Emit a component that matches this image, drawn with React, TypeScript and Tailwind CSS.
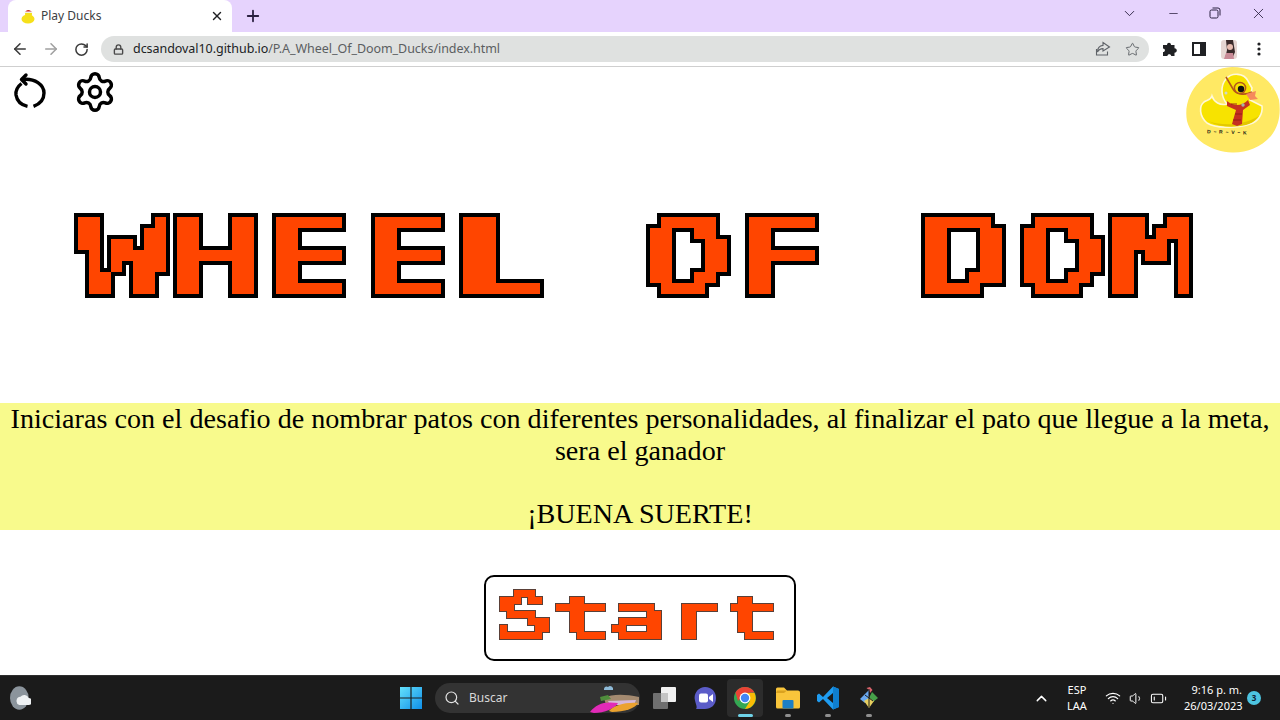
import React from "react";
import { ArrowLeft, ArrowRight, RotateCw, Lock, Star, ChevronDown, ChevronUp, Minus, X, Plus, Settings, Search, Wifi, Volume1, BatteryLow } from "lucide-react";

function PixelFilter({ id, tile, edge, edgeColor }: { id: string; tile: number; edge: number; edgeColor: string }) {
  const c = (tile - 1) / 2;
  return (
    <filter id={id} x="-2%" y="-10%" width="104%" height="120%" colorInterpolationFilters="sRGB" primitiveUnits="userSpaceOnUse">
      <feFlood x={c} y={c} width="1" height="1" floodColor="#ff4500" />
      <feComposite width={tile} height={tile} />
      <feTile result="grid" />
      <feComposite in="SourceAlpha" in2="grid" operator="in" />
      <feMorphology operator="dilate" radius={c} />
      <feComponentTransfer result="mask">
        <feFuncA type="discrete" tableValues="0 1" />
      </feComponentTransfer>
      <feFlood floodColor="#ff4500" result="orange" />
      <feComposite in="orange" in2="mask" operator="in" result="blocks" />
      <feMorphology in="mask" operator="dilate" radius={edge} result="wide" />
      <feFlood floodColor={edgeColor} result="ink" />
      <feComposite in="ink" in2="wide" operator="in" result="edge" />
      <feMerge>
        <feMergeNode in="edge" />
        <feMergeNode in="blocks" />
      </feMerge>
    </filter>
  );
}

function Filters() {
  return (
    <svg width="0" height="0" className="absolute">
      <PixelFilter id="pixelTitle" tile={11} edge={4} edgeColor="#000000" />
      <PixelFilter id="pixelStart" tile={7} edge={1} edgeColor="#5a4038" />
    </svg>
  );
}

function DuckFavicon() {
  return (
    <svg width="16" height="16" viewBox="0 0 16 16">
      <ellipse cx="8" cy="11" rx="6.5" ry="4.5" fill="#f6e01a" />
      <circle cx="8.5" cy="6" r="3.5" fill="#f6e01a" />
      <path d="M5 4 Q8 0 12 4 Z" fill="#c8202a" />
      <rect x="4.5" y="3.5" width="8" height="1.4" fill="#f3f3f3" />
    </svg>
  );
}

function DuckLogo() {
  return (
    <svg width="100" height="92" viewBox="0 0 100 92" className="-mt-[3px]">
      <path d="M52 3 C72 3 93 14 99 36 C101 50 99 62 91 72 C80 84 66 89 52 88.5 C32 88 12 76 7 57 C2 30 24 4 52 3 Z" fill="#ffe964" />
      <path d="M32 32 C34 38 40 42 47 40 C41 33 40 22 46 15 C52 8 64 9 68 17 L72 24 L70 36 C74 38 78 40 82 42 C83 50 78 58 70 60 C55 65 35 64 27 59 C19 52 19 42 24 38 C27 36 31 36 32 32 Z" fill="#f7e300" stroke="#fff8d8" strokeWidth="1.6" />
      <path d="M28 57 C42 62 62 62 79 52 C74 58 70 60 66 61 C52 64 38 63 28 57 Z" fill="#e3c800" />
      <path d="M46 13 L53 25 C56 30 64 32 72 28" fill="none" stroke="#b5561c" strokeWidth="1.6" />
      <circle cx="60" cy="24" r="5.6" fill="#f7e300" stroke="#b5561c" strokeWidth="1.5" />
      <circle cx="61" cy="25" r="3.2" fill="#111" />
      <path d="M66 30 L76 27 L75 32 L78 35 L70 36 Z" fill="#f58a5c" />
      <path d="M47 37 C54 43 62 42 68 36 L70 41 L63 46 L62 60 L57 62 L52 60 L56 46 L47 42 Z" fill="#c5301f" />
      <path d="M53 56 H61 M55 50 H62 M51 40 H57" stroke="#8e1e12" strokeWidth="0.9" />
      <circle cx="63" cy="41" r="1.7" fill="#a8b0a8" />
      <circle cx="46" cy="29" r="1.5" fill="#cfd6cc" />
      <text x="27" y="70" fontSize="5" fontWeight="700" fontFamily="'Liberation Sans', sans-serif" fill="#111" transform="rotate(2 50 70)" xmlSpace="preserve">D  ~  R  ~  V  ~  K</text>
    </svg>
  );
}

function ReloadIcon() {
  return (
    <svg width="36" height="40" viewBox="0 0 36 40" fill="none" stroke="#000" strokeWidth="3.4" className="ml-3 mt-1">
      <path d="M14 4 L9.5 8.5 L14 13" strokeLinecap="round" strokeLinejoin="round" />
      <path d="M10.5 8.5 C23 7 32 14 32 22 C32 28 28 33 21.5 35.4" strokeLinecap="butt" />
      <path d="M9.5 12.5 C5 16 3.5 20 4 24 C5 30 9 34 15.5 35.4" strokeLinecap="butt" />
    </svg>
  );
}

function PuzzleIcon() {
  return (
    <svg width="16" height="16" viewBox="0 0 16 16" fill="#202124">
      <path d="M1 4 H5 C5 1 9 1 9 4 H12.5 V7.3 C15.6 7.3 15.6 11.7 12.5 11.7 V15 H9.2 C9.2 12.6 5.4 12.6 5.4 15 H1 V11 C3.6 11 3.6 7.4 1 7.4 Z" />
    </svg>
  );
}

function WindowsLogo() {
  return (
    <svg width="22" height="22" viewBox="0 0 22 22">
      <defs>
        <linearGradient id="win" x1="0" y1="0" x2="1" y2="1">
          <stop offset="0" stopColor="#64e0fb" />
          <stop offset="1" stopColor="#0f8fe8" />
        </linearGradient>
      </defs>
      <path d="M0 0 H10.4 V10.4 H0 Z M11.6 0 H22 V10.4 H11.6 Z M0 11.6 H10.4 V22 H0 Z M11.6 11.6 H22 V22 H11.6 Z" fill="url(#win)" />
    </svg>
  );
}

function SearchArt() {
  return (
    <svg width="50" height="30" viewBox="0 0 50 30">
      <path d="M14 6 a2.5 2.5 0 0 1 4 -2 a3 3 0 0 1 5 3 H14 Z" fill="#8fbbd8" />
      <path d="M14 15 C22 11 34 11 49 14 L49 22 L16 22 Z" fill="#a48a70" />
      <path d="M10 14 L18 12 L21 16 L11 18 Z" fill="#4f8d3c" />
      <path d="M18 18 L46 17 L44 22 L20 22 Z" fill="#d5b8d8" />
      <path d="M0 29 C6 21 14 18 28 20 C26 25 14 30 4 30 Z" fill="#e22ab8" />
      <path d="M19 28 C24 22 36 19 48 20 C46 25 34 29 22 29 Z" fill="#eba22f" />
    </svg>
  );
}

function TaskView() {
  return (
    <svg width="24" height="24" viewBox="0 0 24 24">
      <rect x="9" y="1" width="15" height="15" rx="1" fill="#f1f1f1" />
      <rect x="1" y="7" width="15" height="16" rx="1" fill="#6f6f6f" />
      <rect x="9" y="7" width="7" height="9" fill="#c4c4c4" />
    </svg>
  );
}

function MeetIcon() {
  return (
    <svg width="24" height="24" viewBox="0 0 24 24">
      <path d="M12 1 C19 1 23 6 23 12 C23 19 18 23 12 23 L3 23 C5 21 2 17 1.6 12 C1.6 6 6 1 12 1 Z" fill="#5b5cc8" />
      <rect x="6" y="7.5" width="9" height="9" rx="2" fill="#fff" />
      <path d="M16 11 L20 8 V16 L16 13 Z" fill="#fff" />
    </svg>
  );
}

function ChromeIcon() {
  return (
    <svg width="24" height="24" viewBox="0 0 24 24">
      <circle cx="12" cy="12" r="11" fill="#34a853" />
      <path d="M12 1 A11 11 0 0 1 21.5 6.5 L12 7 L5 15 L2.5 6.5 A11 11 0 0 1 12 1 Z" fill="#ea4335" />
      <path d="M12 7 H21.5 A11 11 0 0 1 12 23 L17 15 Z" fill="#fbbc05" />
      <circle cx="12" cy="12" r="5.4" fill="#fff" />
      <circle cx="12" cy="12" r="4.2" fill="#4285f4" />
    </svg>
  );
}

function FolderIcon() {
  return (
    <svg width="24" height="22" viewBox="0 0 24 22">
      <path d="M0 2 a1.5 1.5 0 0 1 1.5 -1.5 H8 L11 3.5 H22 a2 2 0 0 1 2 2 V20 a1.5 1.5 0 0 1 -1.5 1.5 H1.5 A1.5 1.5 0 0 1 0 20 Z" fill="#f9c53b" />
      <path d="M0 6 H8 L11 3.5 H1 Z" fill="#d9a21f" />
      <rect x="6.5" y="13" width="11" height="8.5" rx="1" fill="#1d7fc4" />
    </svg>
  );
}

function VSCodeIcon() {
  return (
    <svg width="22" height="24" viewBox="0 0 22 24">
      <path d="M16 0.5 L22 3 V21 L16 23.5 L6 13 L2 16.5 L0 15 V9 L2 7.5 L6 11 Z M16 7 L10 12 L16 17 Z" fill="#1f9cf0" fillRule="evenodd" />
      <path d="M16 0.5 L22 3 V21 L16 23.5 Z" fill="#0f7fd0" />
    </svg>
  );
}

function GitKrakenIcon() {
  return (
    <svg width="20" height="22" viewBox="0 0 20 22">
      <path d="M10 3 L6 7 L1 12 L6 16 L10 12 Z" fill="#6aa8f0" />
      <path d="M10 3 L7.5 1 L11 0 L13.5 3 L11 6 Z" fill="#d9636b" />
      <path d="M13 5 L19 11 L14 15 L10 11 Z" fill="#47a04a" />
      <path d="M5 14 L10 21 L15 14 L10 11 Z" fill="#e8cf5f" />
      <path d="M10 2 V20 M6 8 L14 14" stroke="#1c1c1c" strokeWidth="1" />
    </svg>
  );
}

function TaskSlot({ className = "", running = false, active = false, children }: { className?: string; running?: boolean; active?: boolean; children: React.ReactNode }) {
  return (
    <div className={`relative flex h-[38px] w-[36px] items-center justify-center rounded ${active ? "bg-[#2c2c2c]" : ""} ${className}`}>
      {children}
      {running && <span className={`absolute bottom-0 h-[3px] rounded-full ${active ? "w-[15px] bg-[#6fd3e8]" : "w-[6px] bg-[#8f8f8f]"}`} />}
    </div>
  );
}

function BrowserChrome() {
  return (
    <header className="shrink-0 font-['Noto_Sans',sans-serif]">
      <div className="flex h-[32px] bg-[#e6d3fd]">
        <div className="ml-2 flex h-[32px] w-[224px] items-center rounded-t-lg bg-white pl-[12px] pr-[8px]">
          <DuckFavicon />
          <span className="ml-[5px] flex-1 text-[12px] text-[#3c4043]">Play Ducks</span>
          <X size={14} strokeWidth={2.4} className="text-[#202124]" />
        </div>
        <Plus size={18} strokeWidth={2.4} className="ml-[12px] mt-[7px] text-[#2b2140]" />
        <div className="ml-auto flex h-[26px] items-center text-[#2b2140]">
          <ChevronDown size={17} strokeWidth={1.3} className="mr-[29px]" />
          <Minus size={13} strokeWidth={1.4} className="mr-[29px]" />
          <svg width="12" height="12" viewBox="0 0 12 12" fill="none" stroke="currentColor" className="mr-[29px]"><rect x="1" y="3" width="8" height="8" rx="1.5" /><path d="M3.5 1 H9 a2 2 0 0 1 2 2 V8.5" /></svg>
          <X size={17} strokeWidth={1.2} className="mr-[13px]" />
        </div>
      </div>
      <div className="flex h-[35px] items-center border-b border-[#cfcfcf] bg-white">
        <ArrowLeft size={18} strokeWidth={2.1} className="ml-[11px] text-[#3a3a3a]" />
        <ArrowRight size={18} strokeWidth={2.1} className="ml-[13px] text-[#a0a0a0]" />
        <RotateCw size={15} strokeWidth={2.4} className="ml-[14px] text-[#3a3a3a]" />
        <div className="ml-[12px] flex h-[26px] w-[1048px] items-center rounded-full bg-[#dfe1e0] pl-[12px] pr-[9px]">
          <Lock size={11} strokeWidth={3} className="text-[#4a4a4a]" />
          <span className="ml-[9px] flex-1 text-[12.5px] tracking-[-0.05px] text-[#202124]">
            dcsandoval10.github.io<span className="text-[#5b5e60]">/P.A_Wheel_Of_Doom_Ducks/index.html</span>
          </span>
          <svg width="16" height="16" viewBox="0 0 16 16" fill="none" stroke="#5f6368" strokeWidth="1.1" className="mr-[14px]">
            <path d="M8 1.5 L14.5 6 L8 10 V7.6 C5 7.6 3.5 9 2.5 11 C2.5 7.5 4.5 4.8 8 4.4 Z" />
            <path d="M1.5 8 V14 H12.5 V10.5" />
          </svg>
          <Star size={15} strokeWidth={1.5} className="text-[#5f6368]" />
        </div>
        <div className="ml-[13px] flex items-center">
          <PuzzleIcon />
          <svg width="14" height="14" viewBox="0 0 14 14" className="ml-[14px]"><path d="M0 0 H14 V14 H0 Z M2 2 V12 H8 V2 Z" fill="#202124" fillRule="evenodd" /></svg>
          <svg width="16" height="19" viewBox="0 0 16 19" className="ml-[15px]">
            <rect width="16" height="19" rx="3" fill="#e6d6d2" />
            <path d="M5 0 H12 L14 12 L11 19 H4 L6 10 Z" fill="#3a2a2a" />
            <circle cx="9" cy="7" r="3" fill="#e8bdb1" />
            <path d="M5 13 H12 L13 19 H3 Z" fill="#c98a96" />
          </svg>
          <svg width="4" height="14" viewBox="0 0 4 14" className="ml-[20px]" fill="#202124"><circle cx="2" cy="2" r="1.6" /><circle cx="2" cy="7" r="1.6" /><circle cx="2" cy="12" r="1.6" /></svg>
        </div>
      </div>
    </header>
  );
}

function Taskbar() {
  return (
    <footer className="flex h-[45px] shrink-0 items-center border-t border-[#2e2e2e] bg-[#1b1b1b] font-['Noto_Sans',sans-serif] text-white">
      <svg width="21" height="24" viewBox="0 0 18 20" className="ml-[10px]">
        <ellipse cx="8" cy="10" rx="8" ry="10" fill="#8b949c" />
        <path d="M8 16 a3.6 3.6 0 0 1 1 -7 a4 4 0 0 1 7 1 a3 3 0 0 1 0 6 Z" fill="#eef1f3" />
      </svg>
      <div className="ml-[369px]"><WindowsLogo /></div>
      <div className="relative ml-[13px] flex h-[30px] w-[205px] items-center rounded-full bg-[#333333] pl-[9px] text-[12px] text-[#d8d8d8]">
        <Search size={16} strokeWidth={1.8} className="text-[#e4e4e4]" />
        <span className="ml-[9px]">Buscar</span>
        <div className="absolute right-0 top-0"><SearchArt /></div>
      </div>
      <TaskSlot className="ml-[6px]"><TaskView /></TaskSlot>
      <TaskSlot className="ml-[5px]"><MeetIcon /></TaskSlot>
      <TaskSlot active running className="ml-[4px]"><ChromeIcon /></TaskSlot>
      <TaskSlot running className="ml-[7px]"><FolderIcon /></TaskSlot>
      <TaskSlot running className="ml-[4px]"><VSCodeIcon /></TaskSlot>
      <TaskSlot running className="ml-[5px]"><GitKrakenIcon /></TaskSlot>
      <ChevronUp size={17} strokeWidth={2} className="ml-[146px]" />
      <div className="ml-[15px] w-[24px] text-center text-[11px] leading-[16px]">ESP<br />LAA</div>
      <Wifi size={16} strokeWidth={1.8} className="ml-[16px]" />
      <Volume1 size={15} strokeWidth={1.6} className="ml-[8px]" />
      <BatteryLow size={17} strokeWidth={1.5} className="ml-[6px]" />
      <div className="ml-[17px] w-[58px] whitespace-nowrap text-right text-[11px] leading-[16px]">9:16 p. m.<br />26/03/2023</div>
      <span className="ml-[5px] flex h-[14px] w-[14px] items-center justify-center rounded-full bg-[#4dc4e0] text-[8px] font-bold text-[#123]">3</span>
    </footer>
  );
}

export default function App() {
  return (
    <div className="flex h-[720px] w-[1280px] flex-col overflow-hidden bg-white">
      <Filters />
      <BrowserChrome />
      <main className="flex min-h-0 flex-1 flex-col font-['Liberation_Serif',serif] text-black">
        <div className="flex h-[85px] items-start justify-between">
          <div className="flex items-start">
            <ReloadIcon />
            <Settings size={44} strokeWidth={1.9} className="ml-[25px] mt-[3px]" />
          </div>
          <DuckLogo />
        </div>
        <div className="flex h-[251px] justify-center pt-[54px]">
          <div className="ml-[10px] h-[110px] w-[1200px] pl-[32px] [filter:url(#pixelTitle)]">
            <h1 className="origin-top-left scale-x-[1.48] whitespace-nowrap font-['DejaVu_Sans_Mono',monospace] text-[105px] font-bold leading-[100px] text-[#ff4500]">WHEEL OF DOM</h1>
          </div>
        </div>
        <p className="bg-[#f8fa8c] text-center text-[28.13px] leading-[31.75px]">
          Iniciaras con el desafio de nombrar patos con diferentes personalidades, al finalizar el pato que llegue a la meta, sera el ganador
          <br />
          <br />
          ¡BUENA SUERTE!
        </p>
        <div className="flex justify-center pt-[45px]">
          <button className="flex h-[86px] w-[312px] items-center justify-center rounded-[10px] border-2 border-black bg-white">
            <span className="mr-[8px] block h-[70px] w-[300px] pl-[10px] [filter:url(#pixelStart)]">
              <span className="block origin-top-left scale-x-[1.52] whitespace-nowrap text-left font-['DejaVu_Sans_Mono',monospace] text-[62px] font-bold leading-[70px] text-[#ff4500]">Start</span>
            </span>
          </button>
        </div>
      </main>
      <Taskbar />
    </div>
  );
}
